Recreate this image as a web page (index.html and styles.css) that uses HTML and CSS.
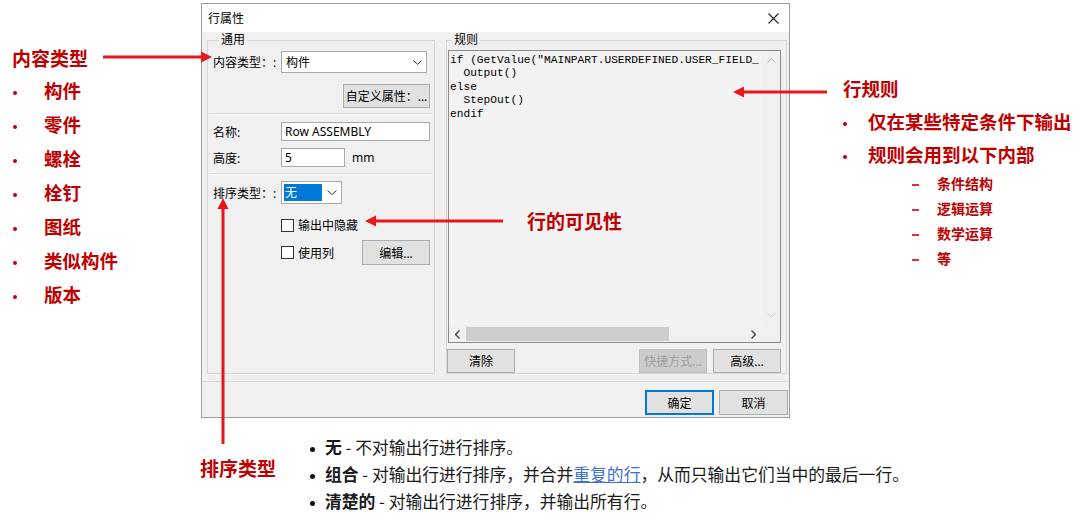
FILE: index.html
```html
<!DOCTYPE html>
<html lang="zh-CN">
<head>
    <meta charset="UTF-8">
    <meta name="viewport" content="width=device-width, initial-scale=1.0">
    <title>行属性</title>
    <link rel="stylesheet" href="styles.css">
</head>
<body>
<div class="page">

    <div class="top">
        <!-- Notas da esquerda: tipos de conteúdo -->
        <div class="left-notes">
            <h2 class="note-title">内容类型</h2>
            <ul class="note-list">
                <li>构件</li>
                <li>零件</li>
                <li>螺栓</li>
                <li>栓钉</li>
                <li>图纸</li>
                <li>类似构件</li>
                <li>版本</li>
            </ul>
        </div>

        <!-- Janela do diálogo -->
        <div class="dialog">
            <div class="title-bar">
                <span>行属性</span>
                <svg class="close" width="11" height="11" viewBox="0 0 11 11">
                    <path d="M0.5 0.5 L10.5 10.5 M10.5 0.5 L0.5 10.5" stroke="#222" stroke-width="1.1" fill="none"/>
                </svg>
            </div>

            <div class="dialog-body">
                <fieldset class="group group-general">
                    <legend>通用</legend>
                    <div class="field first">
                        <span class="field-label">内容类型：:</span>
                        <div class="select select-wide">
                            <span>构件</span>
                            <svg width="9" height="5" viewBox="0 0 9 5"><path d="M0.5 0.5 L4.5 4.5 L8.5 0.5" stroke="#333" fill="none"/></svg>
                        </div>
                    </div>
                    <div class="field-right">
                        <button class="btn btn-custom">自定义属性：...</button>
                    </div>
                    <div class="sep"></div>
                    <div class="field gap7">
                        <span class="field-label">名称:</span>
                        <div class="input input-name">Row ASSEMBLY</div>
                    </div>
                    <div class="field gap7">
                        <span class="field-label">高度:</span>
                        <div class="input input-height">5</div>
                        <span class="unit">mm</span>
                    </div>
                    <div class="sep sep-second"></div>
                    <div class="field gap6">
                        <span class="field-label">排序类型：:</span>
                        <div class="select select-sort">
                            <span class="selected">无</span>
                            <svg width="10" height="5" viewBox="0 0 10 5"><path d="M0.5 0.5 L5 4.5 L9.5 0.5" stroke="#333" fill="none"/></svg>
                        </div>
                    </div>
                    <div class="check-row check-first">
                        <span class="checkbox"></span>
                        <span>输出中隐藏</span>
                    </div>
                    <div class="check-row check-second">
                        <span class="checkbox"></span>
                        <span>使用列</span>
                        <button class="btn btn-edit">编辑...</button>
                    </div>
                </fieldset>

                <fieldset class="group group-rule">
                    <legend>规则</legend>
                    <div class="code-box">
                        <pre class="code">if (GetValue("MAINPART.USERDEFINED.USER_FIELD_
  Output()
else
  StepOut()
endif</pre>
                        <div class="vscroll">
                            <svg width="9" height="5" viewBox="0 0 9 5"><path d="M0.5 4.5 L4.5 0.5 L8.5 4.5" stroke="#bbb" fill="none"/></svg>
                            <svg width="9" height="5" viewBox="0 0 9 5"><path d="M0.5 0.5 L4.5 4.5 L8.5 0.5" stroke="#ccc" fill="none"/></svg>
                        </div>
                        <div class="hscroll">
                            <span class="hs-arrow">
                                <svg width="5" height="9" viewBox="0 0 5 9"><path d="M4.5 0.5 L0.5 4.5 L4.5 8.5" stroke="#444" stroke-width="1.4" fill="none"/></svg>
                            </span>
                            <span class="hs-thumb"></span>
                            <span class="hs-arrow">
                                <svg width="5" height="9" viewBox="0 0 5 9"><path d="M0.5 0.5 L4.5 4.5 L0.5 8.5" stroke="#444" stroke-width="1.4" fill="none"/></svg>
                            </span>
                        </div>
                        <div class="corner"></div>
                    </div>
                    <div class="rule-buttons">
                        <button class="btn btn-small">清除</button>
                        <span class="spacer"></span>
                        <button class="btn btn-small disabled">快捷方式...</button>
                        <button class="btn btn-small">高级...</button>
                    </div>
                </fieldset>
            </div>

            <div class="dialog-footer">
                <button class="btn btn-footer primary">确定</button>
                <button class="btn btn-footer">取消</button>
            </div>
        </div>

        <!-- Notas da direita: regra da linha -->
        <div class="right-notes">
            <h2 class="rule-title">行规则</h2>
            <ul class="rule-list">
                <li>仅在某些特定条件下输出</li>
                <li>规则会用到以下内部</li>
            </ul>
            <ul class="sub-list">
                <li>条件结构</li>
                <li>逻辑运算</li>
                <li>数学运算</li>
                <li>等</li>
            </ul>
        </div>
    </div>

    <!-- Tipos de ordenação -->
    <div class="bottom">
        <div class="sort-note">排序类型</div>
        <ul class="sort-list">
            <li><b>无</b> - 不对输出行进行排序。</li>
            <li><b>组合</b> - 对输出行进行排序，并合并<a href="#" class="link">重复的行</a>，从而只输出它们当中的最后一行。</li>
            <li><b>清楚的</b> - 对输出行进行排序，并输出所有行。</li>
        </ul>
    </div>

    <div class="visibility-note">行的可见性</div>

    <!-- Setas vermelhas por cima de tudo -->
    <svg class="arrows" width="1080" height="522" viewBox="0 0 1080 522">
        <g stroke="#e8161b" stroke-width="3" fill="none">
            <line x1="103" y1="57" x2="203" y2="57"/>
            <line x1="503" y1="221" x2="374" y2="221"/>
            <line x1="223" y1="444" x2="223" y2="207"/>
            <line x1="827" y1="92" x2="742" y2="92"/>
        </g>
        <g fill="#e8161b">
            <polygon points="212,57 201,51.5 201,62.5"/>
            <polygon points="365,221 376,215.5 376,226.5"/>
            <polygon points="223,198 217.5,209 228.5,209"/>
            <polygon points="733,92 744,86.5 744,97.5"/>
        </g>
    </svg>
</div>
</body>
</html>
```

FILE: styles.css
```css
* {
    box-sizing: border-box;
}

body {
    margin: 0;
    background-color: #fff;
    font-family: "Noto Sans", "Noto Sans CJK SC", sans-serif;
}

.page {
    position: relative;
    width: 1080px;
    height: 522px;
    overflow: hidden;
}

.top {
    display: flex;
    height: 420px;
}

/* notas vermelhas */
.left-notes,
.right-notes,
.sort-note,
.visibility-note {
    font-family: "Noto Sans CJK SC", sans-serif;
    font-weight: 700;
    color: #c00000;
}

.left-notes {
    width: 201px;
    flex-shrink: 0;
    padding: 41px 0 0 12px;
}

.note-title {
    margin: 0;
    font-size: 19px;
    line-height: 34px;
}

.note-list,
.rule-list,
.sub-list,
.sort-list {
    list-style: none;
    margin: 0;
    padding: 0;
}

.note-list {
    margin-top: -2px;
}

.note-list li {
    font-size: 18.5px;
    line-height: 34px;
}

.note-list li::before,
.rule-list li::before {
    content: "";
    display: inline-block;
    width: 4px;
    height: 4px;
    border-radius: 50%;
    background-color: #c00000;
    vertical-align: middle;
    margin: 0 27px 0 1px;
}

.right-notes {
    flex: 1;
    padding: 72px 0 0 53px;
}

.rule-title {
    margin: 0;
    font-size: 18.5px;
    line-height: 33px;
}

.rule-list li {
    font-size: 18.5px;
    line-height: 33px;
    white-space: nowrap;
}

.rule-list li::before {
    margin: 0 21px 0 0;
}

.sub-list {
    padding-left: 69px;
}

.sub-list li {
    font-size: 14px;
    line-height: 25px;
}

.sub-list li::before {
    content: "";
    display: inline-block;
    width: 7px;
    height: 1.5px;
    background-color: #d23a3a;
    vertical-align: middle;
    margin-right: 18px;
}

.visibility-note {
    position: absolute;
    left: 527px;
    top: 208px;
    font-size: 19px;
    line-height: 26px;
}

.arrows {
    position: absolute;
    top: 0;
    left: 0;
    pointer-events: none;
}

/* diálogo */
.dialog {
    width: 589px;
    height: 415px;
    margin-top: 3px;
    flex-shrink: 0;
    border: 1px solid #9c9c9c;
    background-color: #f0f0f0;
    font-size: 12px;
    color: #000;
    display: flex;
    flex-direction: column;
}

.title-bar {
    height: 28px;
    background-color: #fff;
    display: flex;
    align-items: center;
    justify-content: space-between;
    padding: 0 10px 0 6px;
}

.dialog-body {
    display: flex;
    gap: 11px;
    height: 342px;
    padding: 0 2px 0 5px;
}

.group {
    margin: 0;
    padding: 0 4px 0 5px;
    border: 1px solid #d6d6d6;
    min-width: 0;
    height: 342px;
}

.group legend {
    padding: 0 2px;
    margin-left: 6px;
    line-height: 16px;
    font-size: 12px;
}

.group-general {
    width: 228px;
    display: flex;
    flex-direction: column;
}

.group-rule {
    width: 341px;
    padding: 0 5px 0 1px;
}

.group-rule legend {
    margin-left: 4px;
}

.field {
    display: flex;
    align-items: center;
}

.field.first {
    margin-top: 3px;
}

.gap7 {
    margin-top: 7px;
}

.gap6 {
    margin-top: 6px;
}

.field-label {
    width: 68px;
    flex-shrink: 0;
}

.select {
    height: 22px;
    background-color: #fff;
    border: 1px solid #a9a9a9;
    display: flex;
    align-items: center;
    justify-content: space-between;
    padding: 0 4px 0 4px;
}

.select-wide {
    width: 146px;
}

.select-sort {
    width: 61px;
    height: 23px;
    padding-left: 2px;
}

.selected {
    width: 38px;
    height: 17px;
    line-height: 17px;
    padding-left: 1px;
    background-color: #0078d7;
    color: #fff;
}

.input {
    height: 19px;
    line-height: 17px;
    background-color: #fff;
    border: 1px solid #a9a9a9;
    padding-left: 3px;
}

.input-name {
    width: 149px;
}

.input-height {
    width: 64px;
}

.unit {
    margin-left: 7px;
}

.field-right {
    display: flex;
    justify-content: flex-end;
    margin-top: 11px;
}

.sep {
    height: 2px;
    border-top: 1px solid #d6d6d6;
    border-bottom: 1px solid #fff;
    margin: 5px -2px 0 -4px;
}

.sep-second {
    margin-top: 6px;
}

.btn {
    font-family: "Noto Sans", "Noto Sans CJK SC", sans-serif;
    font-size: 12px;
    color: #000;
    background-color: #e1e1e1;
    border: 1px solid #adadad;
    padding: 0;
    text-align: center;
}

.btn-custom {
    width: 87px;
    height: 24px;
}

.btn-edit {
    width: 68px;
    height: 25px;
    margin-left: auto;
}

.check-row {
    display: flex;
    align-items: center;
    gap: 4px;
    padding-left: 68px;
}

.check-first {
    margin-top: 13px;
    height: 16px;
}

.check-second {
    margin-top: 7px;
}

.checkbox {
    width: 13px;
    height: 13px;
    border: 1px solid #333;
    background-color: #fff;
}

/* caixa de código da regra */
.code-box {
    margin-top: 2px;
    height: 293px;
    border: 1px solid #8a8a8a;
    display: grid;
    grid-template-columns: 1fr 18px;
    grid-template-rows: 1fr 16px;
}

.code {
    margin: 0;
    padding: 3px 0 0 1px;
    font-family: "Liberation Mono", monospace;
    font-size: 11.2px;
    line-height: 13.4px;
    color: #000;
    background-color: #f2f2f2;
    overflow: hidden;
    white-space: pre;
}

.vscroll {
    background-color: #f0f0f0;
    display: flex;
    flex-direction: column;
    justify-content: space-between;
    align-items: center;
    padding: 7px 0 8px;
}

.hscroll {
    background-color: #f0f0f0;
    display: flex;
    align-items: center;
}

.hs-arrow {
    width: 17px;
    display: flex;
    justify-content: center;
}

.hs-thumb {
    width: 203px;
    height: 14px;
    background-color: #cdcdcd;
}

.hs-arrow:last-child {
    margin-left: auto;
}

.corner {
    background-color: #f0f0f0;
}

.rule-buttons {
    display: flex;
    gap: 6px;
    margin: 6px 0 0 -1px;
}

.spacer {
    flex: 1;
}

.btn-small {
    width: 68px;
    height: 24px;
}

.btn.disabled {
    background-color: #cccccc;
    border-color: #bfbfbf;
    color: #a0a0a0;
}

.dialog-footer {
    margin-top: 7px;
    border-top: 1px solid #dadada;
    padding: 8px 1px 0 0;
    display: flex;
    justify-content: flex-end;
    gap: 5px;
}

.btn-footer {
    width: 69px;
    height: 25px;
}

.btn.primary {
    border-color: #0078d7;
    box-shadow: inset 0 0 0 1px #0078d7;
}

/* tipos de ordenação */
.bottom {
    display: flex;
    padding-left: 200px;
}

.sort-note {
    width: 110px;
    flex-shrink: 0;
    padding-top: 34px;
    font-size: 19px;
    line-height: 27px;
}

.sort-list {
    padding-top: 14px;
    font-family: "Noto Sans CJK SC", sans-serif;
    font-size: 16.8px;
    line-height: 27px;
    color: #1a1a1a;
}

.sort-list li {
    white-space: nowrap;
}

.sort-list li::before {
    content: "";
    display: inline-block;
    width: 5px;
    height: 5px;
    border-radius: 50%;
    background-color: #111;
    vertical-align: middle;
    margin-right: 10px;
}

.link {
    color: #3a6fd8;
    text-decoration: underline;
}
```
